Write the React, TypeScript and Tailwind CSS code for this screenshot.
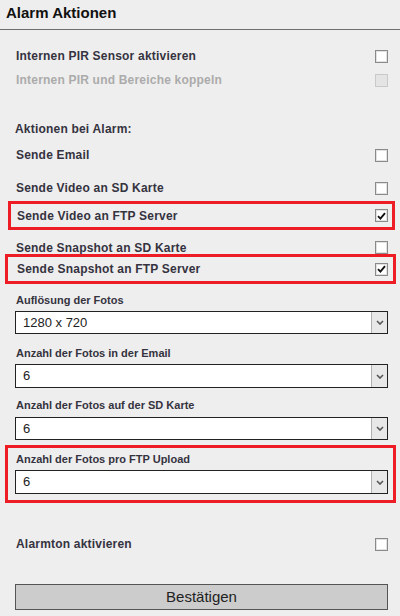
import React from "react";

const font = { fontFamily: '"Liberation Sans", Arial, sans-serif' };

function Check({ checked = false, disabled = false }: { checked?: boolean; disabled?: boolean }) {
  return (
    <span
      className={
        "flex h-[13px] w-[13px] shrink-0 items-center justify-center border " +
        (disabled ? "border-[#c9c9c9] bg-[#e4e4e4]" : "border-[#8a8a8a] bg-white shadow-[inset_0_0_0_1px_#e2e2e2]")
      }
    >
      {checked && (
        <svg width="9" height="8" viewBox="0 0 9 8">
          <path d="M1 4.2 L3.4 6.6 L8 1.2" fill="none" stroke="#111" strokeWidth="1.9" />
        </svg>
      )}
    </span>
  );
}

function Row({ label, checked, disabled, cls }: { label: string; checked?: boolean; disabled?: boolean; cls: string }) {
  return (
    <div className={"flex items-center justify-between " + cls}>
      <span
        className={
          "pl-[1px] text-[12px] font-bold tracking-[0.2px] " + (disabled ? "text-[#ababab]" : "text-[#353340]")
        }
      >
        {label}
      </span>
      <Check checked={checked} disabled={disabled} />
    </div>
  );
}

function Select({ value, cls }: { value: string; cls: string }) {
  return (
    <div className={"flex items-stretch border border-[#222] bg-white " + cls}>
      <span className="flex flex-1 items-center pl-[7px] text-[13px] text-[#222]">{value}</span>
      <span className="flex w-[16px] items-center justify-center border-l border-[#b0b0b0] bg-[#e8e8e8]">
        <svg width="8" height="5" viewBox="0 0 8 5">
          <path d="M1 1 L4 4 L7 1" fill="none" stroke="#555" strokeWidth="1.6" />
        </svg>
      </span>
    </div>
  );
}

function Label({ text, cls }: { text: string; cls: string }) {
  return (
    <div className={"flex h-[16px] items-center pl-[1px] text-[11px] font-bold text-[#353340] " + cls}>{text}</div>
  );
}

export default function App() {
  return (
    <div className="h-[616px] w-[400px] overflow-hidden bg-[#eeeeee]" style={font}>
      <div className="h-[30px] border-b border-[#6e6e6e] pl-[6px] pt-[1px]">
        <span className="text-[15px] font-bold leading-[18px] text-[#111]">Alarm Aktionen</span>
      </div>
      <div className="flex flex-col pl-[15px] pr-[12px]">
        <Row label="Internen PIR Sensor aktivieren" cls="mt-[16px] h-[20px]" />
        <Row label="Internen PIR und Bereiche koppeln" disabled cls="mt-[4px] h-[20px]" />
        <div className="mt-[29px] flex h-[20px] items-center text-[12px] font-bold tracking-[0.2px] text-[#353340]">
          Aktionen bei Alarm:
        </div>
        <Row label="Sende Email" cls="mt-[6px] h-[20px]" />
        <Row label="Sende Video an SD Karte" cls="mt-[13px] h-[20px]" />
        <div className="-ml-[7px] -mr-[7px] mt-[3px] border-[3px] border-[#ee1c25] pl-[5px] pr-[4px]">
          <Row label="Sende Video an FTP Server" checked cls="h-[23px]" />
        </div>
        <Row label="Sende Snapshot an SD Karte" cls="mt-[11px] h-[13px]" />
        <div className="-ml-[10px] -mr-[8px] border-[3px] border-[#ee1c25] pl-[8px] pr-[5px]">
          <Row label="Sende Snapshot an FTP Server" checked cls="h-[24px]" />
        </div>
        <Label text="Auflösung der Fotos" cls="mt-[8px]" />
        <Select value="1280 x 720" cls="mt-[3px] h-[23px]" />
        <Label text="Anzahl der Fotos in der Email" cls="mt-[11px]" />
        <Select value="6" cls="mt-[3px] h-[24px]" />
        <Label text="Anzahl der Fotos auf der SD Karte" cls="mt-[9px]" />
        <Select value="6" cls="mt-[4px] h-[23px]" />
        <div className="-ml-[10px] -mr-[8px] mt-[5px] border-[3px] border-[#ee1c25] pb-[6px] pl-[7px] pr-[5px]">
          <Label text="Anzahl der Fotos pro FTP Upload" cls="mt-[3px]" />
          <Select value="6" cls="mt-[3px] h-[24px]" />
        </div>
        <Row label="Alarmton aktivieren" cls="mt-[31px] h-[20px]" />
        <button className="mt-[30px] flex h-[26px] items-center justify-center border border-[#555] bg-[#cccccc] text-[15px] text-[#222]">
          Bestätigen
        </button>
      </div>
    </div>
  );
}
